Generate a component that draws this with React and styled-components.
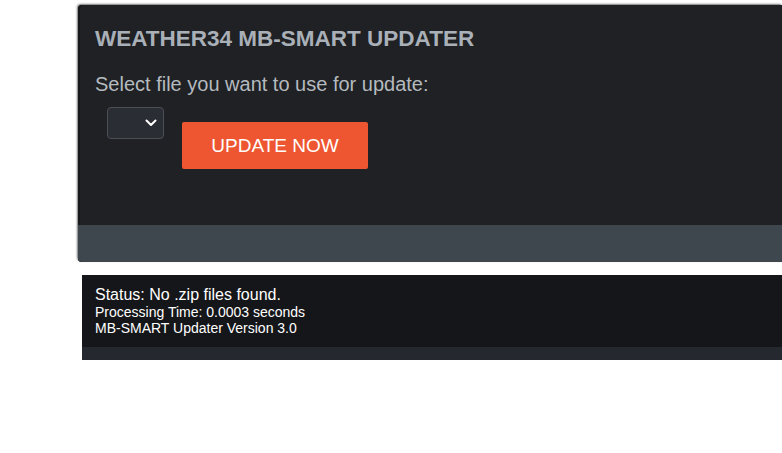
import React from "react";
import styled, { createGlobalStyle } from "styled-components";

const Global = createGlobalStyle`
  html, body { margin: 0; padding: 0; background: #fff; overflow: hidden; }
  body { font-family: "Liberation Sans", Arial, sans-serif; }
`;

const Page = styled.div`
  display: flex;
  flex-direction: column;
  align-items: flex-start;
  padding-top: 5px;
  width: 782px;
`;

const Panel = styled.section`
  margin-left: 78px;
  width: 704px;
  flex-shrink: 0;
  background: #1f2124;
  border-radius: 4px 0 0 4px;
  box-shadow: -1px -1px 2px rgba(0, 0, 0, 0.55), inset 2px 0 0 #16181a;
  overflow: hidden;
  display: flex;
  flex-direction: column;
`;

const Body = styled.div`
  height: 220px;
  box-sizing: border-box;
  padding: 22px 17px 0;
`;

const Title = styled.h1`
  margin: 0;
  font-size: 22.5px;
  font-weight: bold;
  color: #a9b0b8;
  line-height: 24px;
`;

const Label = styled.p`
  margin: 22px 0 0;
  font-size: 20px;
  color: #b5babf;
  line-height: 22px;
`;

const Controls = styled.div`
  display: flex;
  align-items: flex-start;
  margin: 12px 0 0 12px;
  gap: 18px;
`;

const Select = styled.div`
  width: 57px;
  height: 32px;
  box-sizing: border-box;
  border: 1px solid #4b4f56;
  border-radius: 4px;
  background: #2a2d33;
  display: flex;
  align-items: center;
  justify-content: flex-end;
  padding-right: 6px;
`;

const Button = styled.button`
  margin-top: 15px;
  width: 186px;
  height: 47px;
  border: none;
  border-radius: 2px;
  background: #ee5632;
  color: #fff;
  font-family: "Liberation Sans", Arial, sans-serif;
  font-size: 19px;
  padding: 0;
`;

const Footer = styled.div`
  height: 37px;
  background: #3e474d;
`;

const StatusPanel = styled.section`
  margin: 13px 0 0 82px;
  width: 700px;
  flex-shrink: 0;
  display: flex;
  flex-direction: column;
`;

const StatusBody = styled.div`
  background: #151619;
  height: 72px;
  box-sizing: border-box;
  padding: 11px 13px 0;
  color: #fff;
`;

const StatusLine = styled.div`
  font-size: ${(p) => p.$size}px;
  line-height: ${(p) => p.$lh}px;
`;

const StatusStrip = styled.div`
  height: 13px;
  background: #262830;
`;

export default function App() {
  return (
    <>
      <Global />
      <Page>
        <Panel>
          <Body>
            <Title>WEATHER34 MB-SMART UPDATER</Title>
            <Label>Select file you want to use for update:</Label>
            <Controls>
              <Select>
                <svg width="12" height="8" viewBox="0 0 12 8">
                  <path d="M1.5 1.5 L6 6 L10.5 1.5" fill="none" stroke="#fff" strokeWidth="2" strokeLinecap="round" strokeLinejoin="round" />
                </svg>
              </Select>
              <Button>UPDATE NOW</Button>
            </Controls>
          </Body>
          <Footer />
        </Panel>
        <StatusPanel>
          <StatusBody>
            <StatusLine $size={16} $lh={18}>Status: No .zip files found.</StatusLine>
            <StatusLine $size={14} $lh={16}>Processing Time: 0.0003 seconds</StatusLine>
            <StatusLine $size={14} $lh={16}>MB-SMART Updater Version 3.0</StatusLine>
          </StatusBody>
          <StatusStrip />
        </StatusPanel>
      </Page>
    </>
  );
}
